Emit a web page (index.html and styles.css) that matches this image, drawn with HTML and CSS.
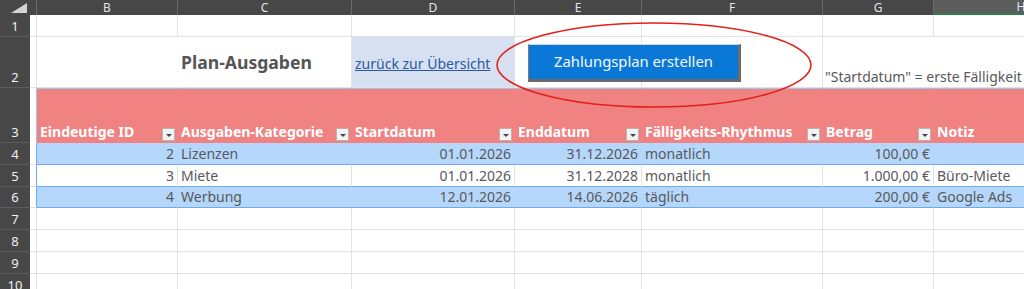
FILE: index.html
```html
<!DOCTYPE html>
<html>
<head>
    <title>Plan-Ausgaben</title>
    <link rel="stylesheet" href="styles.css">
</head>
<body>
<div class="sheet">
    <div class="row r-head">
        <div class="corner">
            <svg width="37" height="15" viewBox="0 0 37 15"><polygon points="27,3 27,13 11,13" fill="#d4d4d4"/></svg>
        </div>
        <div class="ch">B</div>
        <div class="ch">C</div>
        <div class="ch">D</div>
        <div class="ch">E</div>
        <div class="ch">F</div>
        <div class="ch">G</div>
        <div class="ch selected">H</div>
    </div>

    <div class="row r1">
        <div class="rh">1</div><div class="cell a"></div>
        <div class="cell"></div><div class="cell"></div><div class="cell"></div>
        <div class="cell"></div><div class="cell"></div><div class="cell"></div><div class="cell"></div>
    </div>

    <div class="row r2">
        <div class="rh">2</div><div class="cell a"></div>
        <div class="cell no-right"></div>
        <div class="cell title">Plan-Ausgaben</div>
        <div class="cell link-cell"><a href="#">zurück zur Übersicht</a></div>
        <div class="cell"></div>
        <div class="cell"></div>
        <div class="cell no-right overflow">"Startdatum" = erste Fälligkeit</div>
        <div class="cell"></div>
    </div>

    <div class="row r3">
        <div class="rh">3</div><div class="cell a tbl-edge"></div>
        <div class="cell th">Eindeutige ID<span class="filter"></span></div>
        <div class="cell th">Ausgaben-Kategorie<span class="filter"></span></div>
        <div class="cell th">Startdatum<span class="filter"></span></div>
        <div class="cell th">Enddatum<span class="filter"></span></div>
        <div class="cell th">Fälligkeits-Rhythmus<span class="filter"></span></div>
        <div class="cell th">Betrag<span class="filter"></span></div>
        <div class="cell th">Notiz</div>
    </div>

    <div class="row r-data band">
        <div class="rh">4</div><div class="cell a tbl-edge"></div>
        <div class="cell num">2</div>
        <div class="cell">Lizenzen</div>
        <div class="cell num">01.01.2026</div>
        <div class="cell num">31.12.2026</div>
        <div class="cell">monatlich</div>
        <div class="cell num">100,00 €</div>
        <div class="cell"></div>
    </div>

    <div class="row r-data">
        <div class="rh">5</div><div class="cell a tbl-edge"></div>
        <div class="cell num">3</div>
        <div class="cell">Miete</div>
        <div class="cell num">01.01.2026</div>
        <div class="cell num">31.12.2028</div>
        <div class="cell">monatlich</div>
        <div class="cell num">1.000,00 €</div>
        <div class="cell">Büro-Miete</div>
    </div>

    <div class="row r-data band r6">
        <div class="rh">6</div><div class="cell a tbl-edge"></div>
        <div class="cell num">4</div>
        <div class="cell">Werbung</div>
        <div class="cell num">12.01.2026</div>
        <div class="cell num">14.06.2026</div>
        <div class="cell">täglich</div>
        <div class="cell num">200,00 €</div>
        <div class="cell">Google Ads</div>
    </div>

    <div class="row r-empty">
        <div class="rh">7</div><div class="cell a"></div>
        <div class="cell"></div><div class="cell"></div><div class="cell"></div>
        <div class="cell"></div><div class="cell"></div><div class="cell"></div><div class="cell"></div>
    </div>
    <div class="row r-empty">
        <div class="rh">8</div><div class="cell a"></div>
        <div class="cell"></div><div class="cell"></div><div class="cell"></div>
        <div class="cell"></div><div class="cell"></div><div class="cell"></div><div class="cell"></div>
    </div>
    <div class="row r-empty">
        <div class="rh">9</div><div class="cell a"></div>
        <div class="cell"></div><div class="cell"></div><div class="cell"></div>
        <div class="cell"></div><div class="cell"></div><div class="cell"></div><div class="cell"></div>
    </div>
    <div class="row r-empty">
        <div class="rh">10</div><div class="cell a"></div>
        <div class="cell"></div><div class="cell"></div><div class="cell"></div>
        <div class="cell"></div><div class="cell"></div><div class="cell"></div><div class="cell"></div>
    </div>

    <!-- shapes lying over the sheet -->
    <button class="macro-btn">Zahlungsplan erstellen</button>
    <svg class="marker" width="1024" height="289">
        <ellipse cx="654" cy="65" rx="157" ry="42" fill="none" stroke="#e3201b" stroke-width="1.6"/>
    </svg>
</div>
</body>
</html>
```

FILE: styles.css
```css
body {
    margin: 0;
    background: #fff;
    font-family: "Noto Sans", "Open Sans", sans-serif;
    overflow: hidden;
}
.sheet {
    position: relative;
    width: 1024px;
    height: 289px;
    overflow: hidden;
}
.row {
    display: grid;
    grid-template-columns: 30px 7px 141px 174px 163px 127px 181px 111px 175px;
}
.r-head { height: 15px; grid-template-columns: 37px 141px 174px 163px 127px 181px 111px 175px; }
.r1 { height: 22px; }
.r2 { height: 51px; }
.r3 { height: 55px; }
.r-data { height: 22px; }
.r6 { height: 21px; }
.r-empty { height: 22px; }

/* headers */
.corner {
    background: #474747;
    border-right: 1px solid #6a6a6a;
    height: 15px;
}
.corner svg { display: block; }
.ch {
    background: #474747;
    color: #e4e4e4;
    font-size: 12px;
    line-height: 15px;
    text-align: center;
    border-right: 1px solid #6a6a6a;
    box-sizing: border-box;
}
.ch.selected {
    background: #5c5c5c;
    border-bottom: 2px solid #2e7d4f;
    line-height: 13px;
}
.rh {
    background: #474747;
    color: #f0f0f0;
    font-size: 13px;
    line-height: 16px;
    display: flex;
    justify-content: center;
    align-items: flex-end;
    border-bottom: 1px solid #5c5c5c;
    box-sizing: border-box;
    padding-bottom: 2px;
}

/* cells */
.cell {
    box-sizing: border-box;
    border-right: 1px solid #e2e2e2;
    border-bottom: 1px solid #e2e2e2;
    padding: 0 3px;
    display: flex;
    align-items: flex-end;
    white-space: nowrap;
    font-size: 14px;
    line-height: 20px;
    color: #595959;
}
.cell.a { padding: 0; }
.no-right { border-right-color: transparent; }
.overflow { overflow: visible; position: relative; z-index: 1; padding-left: 2px; }

.title {
    align-items: center;
    font-size: 17.6px;
    font-weight: bold;
    color: #555;
}
.link-cell {
    background: #d6e0f1;
    align-items: center;
    padding-top: 3px;
}
.link-cell a {
    color: #2b5aa3;
    text-decoration: underline;
}

/* table */
.r3 .cell { border-bottom: none; }
.th {
    background: #f08282;
    border-right-color: #f08282;
    border-top: 1px solid #9fc3ec;
    color: #fff;
    font-weight: bold;
    justify-content: space-between;
    padding-bottom: 1px;
}
.filter {
    width: 13px;
    height: 13px;
    box-sizing: border-box;
    background: #f3f3f3;
    border: 1px solid #b5b5b5;
    margin-bottom: 1px;
    margin-right: -1px;
    position: relative;
}
.filter::after {
    content: "";
    position: absolute;
    left: 3px;
    top: 5px;
    border-left: 3px solid transparent;
    border-right: 3px solid transparent;
    border-top: 3px solid #444;
}
.tbl-edge { border-right: 1px solid #6fa9ef; }
.r3 .tbl-edge { border-right-color: #9fc3ec; }
.r-data .cell { border-bottom: 1px solid #6fa9ef; padding-bottom: 0; }
.r-data .cell.a { border-bottom-color: #e2e2e2; }
.band .cell { background: #b5d7fc; border-right-color: #b5d7fc; }
.band .cell.a { background: #fff; border-right-color: #6fa9ef; }
.num { justify-content: flex-end; }

/* shapes */
.macro-btn {
    position: absolute;
    left: 528px;
    top: 44px;
    width: 213px;
    height: 38px;
    box-sizing: border-box;
    background: #0a78d7;
    color: #f4f8ff;
    font-family: "Noto Sans", sans-serif;
    font-size: 14.8px;
    border-top: 1px solid #c8d6e6;
    border-left: 1px solid #7b7b7b;
    border-right: 3px solid #6b6b6b;
    border-bottom: 3px solid #6b6b6b;
    padding: 0 0 2px 0;
    z-index: 2;
}
.marker {
    position: absolute;
    left: 0;
    top: 0;
    pointer-events: none;
    z-index: 3;
}
```
